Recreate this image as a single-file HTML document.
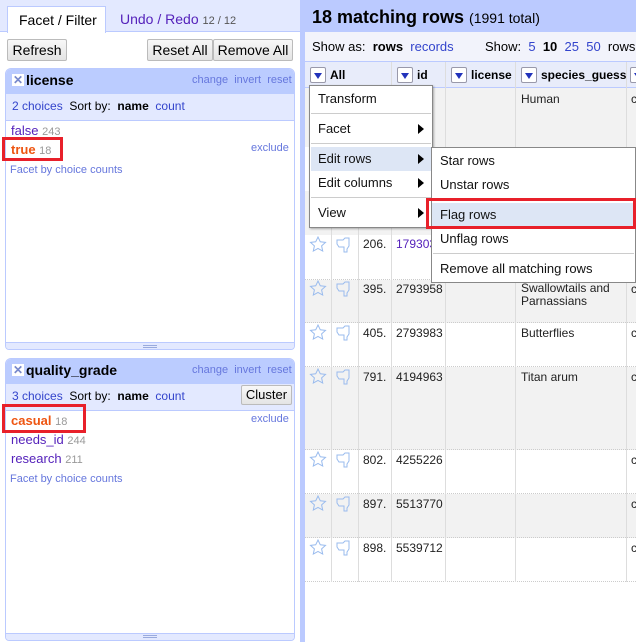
<!DOCTYPE html>
<html><head><meta charset="utf-8"><style>
*{margin:0;padding:0;box-sizing:border-box}
body{width:636px;height:642px;overflow:hidden;font-family:"Liberation Sans",Arial,sans-serif;font-size:13px;color:#000;background:#fff;position:relative}
.a{position:absolute;white-space:nowrap}
.lnk{color:#3344cc}
.sm{color:#6677dd;font-size:11px}
.btn{position:absolute;background:linear-gradient(#f8f8f8,#e4e4e4);border:1px solid #bbb;border-radius:2px;font-size:14px;text-align:center;line-height:20px}
.fx{position:absolute;width:12px;height:12px;background:#fff;color:#7788cc;font-size:12px;line-height:12px;text-align:center;font-weight:bold}
.row{position:absolute;left:305px;width:331px}
.vl{position:absolute;top:88px;height:494px;border-left:1px solid #ddd}
.cell{position:absolute;font-size:12px;color:#222}
.mi{position:absolute;font-size:13px;color:#111}
.arr{position:absolute;width:0;height:0;border-top:5px solid transparent;border-bottom:5px solid transparent;border-left:6px solid #000}
.dd{position:absolute;width:16px;height:16px;border:1px solid #99a;border-radius:2px;background:#fff}
.dd:after{content:"";position:absolute;left:3px;top:5px;border-left:4px solid transparent;border-right:4px solid transparent;border-top:6px solid #2233bb}
</style></head><body>
<!-- left panel -->
<div class="a" style="left:0;top:0;width:302px;height:642px;background:#fff"></div>
<div class="a" style="left:0;top:0;width:302px;height:32px;background:#e3e9ff;border-bottom:1px solid #bbcaff"></div>
<div class="a" style="left:7px;top:6px;width:99px;height:27px;background:#fff;border:1px solid #bbcaff;border-bottom:none;font-size:14px;padding:5px 0 0 11px">Facet / Filter</div>
<div class="a" style="left:120px;top:11px;font-size:14px;color:#5522bb">Undo / Redo <span style="font-size:11px;color:#555">12 / 12</span></div>
<div class="btn" style="left:7px;top:39px;width:60px;height:22px">Refresh</div>
<div class="btn" style="left:147px;top:39px;width:66px;height:22px">Reset All</div>
<div class="btn" style="left:213px;top:39px;width:80px;height:22px">Remove All</div>

<!-- license facet -->
<div class="a" style="left:5px;top:68px;width:290px;height:282px;border:1px solid #bbcaff;border-radius:6px 6px 4px 4px;overflow:hidden;background:#fff">
 <div class="a" style="left:0;top:0;width:290px;height:25px;background:#bbccff"></div>
 <div class="a" style="left:0;top:25px;width:290px;height:27px;background:#e3e9ff;border-bottom:1px solid #bbcaff"></div>
 <div class="a" style="left:0;bottom:0;width:290px;height:7px;background:#e3e9ff;border-top:1px solid #bbcaff"></div>
</div>
<div class="fx" style="left:12px;top:74px">✕</div>
<div class="a" style="left:26px;top:72px;font-size:14px;font-weight:bold">license</div>
<div class="a sm" style="left:192px;top:74px">change&nbsp; invert&nbsp; reset</div>
<div class="a" style="left:12px;top:99px;font-size:12px"><span class="lnk">2 choices</span>&nbsp; Sort by:&nbsp; <b>name</b>&nbsp; <span class="lnk">count</span></div>
<div class="a" style="left:11px;top:123px;font-size:13px;color:#5522bb">false <span style="color:#999;font-size:11px">243</span></div>
<div class="a" style="left:11px;top:142px;font-size:13px;color:#ee5511;font-weight:bold">true <span style="color:#999;font-size:11px;font-weight:normal">18</span></div>
<div class="a sm" style="left:251px;top:142px">exclude</div>
<div class="a sm" style="left:10px;top:164px">Facet by choice counts</div>
<div class="a" style="left:2px;top:137px;width:61px;height:24px;border:3px solid #e8202a"></div>
<div class="a" style="left:143px;top:345px;width:14px;height:3px;border-top:1px solid #99aadd;border-bottom:1px solid #99aadd"></div>

<!-- quality facet -->
<div class="a" style="left:5px;top:358px;width:290px;height:283px;border:1px solid #bbcaff;border-radius:6px 6px 4px 4px;overflow:hidden;background:#fff">
 <div class="a" style="left:0;top:0;width:290px;height:25px;background:#bbccff"></div>
 <div class="a" style="left:0;top:25px;width:290px;height:27px;background:#e3e9ff;border-bottom:1px solid #bbcaff"></div>
 <div class="a" style="left:0;bottom:0;width:290px;height:7px;background:#e3e9ff;border-top:1px solid #bbcaff"></div>
</div>
<div class="fx" style="left:12px;top:364px">✕</div>
<div class="a" style="left:26px;top:362px;font-size:14px;font-weight:bold">quality_grade</div>
<div class="a sm" style="left:192px;top:364px">change&nbsp; invert&nbsp; reset</div>
<div class="a" style="left:12px;top:389px;font-size:12px"><span class="lnk">3 choices</span>&nbsp; Sort by:&nbsp; <b>name</b>&nbsp; <span class="lnk">count</span></div>
<div class="btn" style="left:241px;top:385px;width:51px;height:20px;font-size:13px;line-height:18px">Cluster</div>
<div class="a" style="left:11px;top:413px;font-size:13px;color:#ee5511;font-weight:bold">casual <span style="color:#999;font-size:11px;font-weight:normal">18</span></div>
<div class="a sm" style="left:251px;top:413px">exclude</div>
<div class="a" style="left:11px;top:432px;font-size:13px;color:#5522bb">needs_id <span style="color:#999;font-size:11px">244</span></div>
<div class="a" style="left:11px;top:451px;font-size:13px;color:#5522bb">research <span style="color:#999;font-size:11px">211</span></div>
<div class="a sm" style="left:10px;top:473px">Facet by choice counts</div>
<div class="a" style="left:2px;top:404px;width:84px;height:29px;border:3px solid #e8202a"></div>
<div class="a" style="left:143px;top:635px;width:14px;height:3px;border-top:1px solid #99aadd;border-bottom:1px solid #99aadd"></div>

<!-- right panel -->
<div class="a" style="left:300px;top:0;width:336px;height:642px;background:#bbcaff"></div>
<div class="a" style="left:305px;top:32px;width:331px;height:610px;background:#fff"></div>
<div class="a" style="left:312px;top:7px;font-size:18px;font-weight:bold">18 matching rows <span style="font-weight:normal;font-size:14px">(1991 total)</span></div>
<div class="a" style="left:305px;top:32px;width:331px;height:30px;background:#f2f3fb;border-bottom:1px solid #bbcaff"></div>
<div class="a" style="left:312px;top:39px;font-size:13px">Show as:&nbsp; <b>rows</b>&nbsp; <span class="lnk">records</span></div>
<div class="a" style="left:485px;top:39px;font-size:13px">Show:&nbsp; <span class="lnk">5</span>&nbsp; <b>10</b>&nbsp; <span class="lnk">25</span>&nbsp; <span class="lnk">50</span>&nbsp; rows</div>
<div class="a" style="left:305px;top:62px;width:331px;height:26px;background:#e8ecfa;border-bottom:1px solid #bbcaff"></div>

<!-- rows -->
<div class="row" style="top:88px;height:59px;background:#f2f2f2"></div>
<div class="row" style="top:191px;height:44px;background:#f2f2f2"></div>
<div class="row" style="top:280px;height:43px;background:#f2f2f2"></div>
<div class="row" style="top:367px;height:83px;background:#f2f2f2"></div>
<div class="row" style="top:494px;height:44px;background:#f2f2f2"></div>
<div class="row" style="top:322px;border-top:1px dotted #ccc"></div>
<div class="row" style="top:366px;border-top:1px dotted #ccc"></div>
<div class="row" style="top:449px;border-top:1px dotted #ccc"></div>
<div class="row" style="top:493px;border-top:1px dotted #ccc"></div>
<div class="row" style="top:537px;border-top:1px dotted #ccc"></div>
<div class="row" style="top:581px;border-top:1px dotted #ccc"></div>
<div class="row" style="top:279px;border-top:1px dotted #ccc"></div>
<div class="vl" style="left:331px"></div><div class="vl" style="left:358px"></div>
<div class="vl" style="left:391px;top:62px;height:520px"></div><div class="vl" style="left:445px;top:62px;height:520px"></div>
<div class="vl" style="left:515px;top:62px;height:520px"></div><div class="vl" style="left:626px;top:62px;height:520px"></div>

<div class="dd" style="left:310px;top:67px"></div><div class="a" style="left:330px;top:68px;font-weight:bold;font-size:12px">All</div>
<div class="dd" style="left:397px;top:67px"></div><div class="a" style="left:417px;top:68px;font-weight:bold;font-size:12px">id</div>
<div class="dd" style="left:451px;top:67px"></div><div class="a" style="left:471px;top:68px;font-weight:bold;font-size:12px">license</div>
<div class="dd" style="left:521px;top:67px"></div><div class="a" style="left:541px;top:68px;font-weight:bold;font-size:12px">species_guess</div>
<div class="dd" style="left:630px;top:67px"></div>

<div class="cell" style="left:521px;top:92px">Human</div>
<div id="rw"></div>
<!-- row contents -->
<div class="cell" style="left:363px;top:237px">206.</div><div class="cell" style="left:396px;top:237px;color:#5522bb">179303</div>
<div class="cell" style="left:363px;top:282px">395.</div><div class="cell" style="left:396px;top:282px">2793958</div><div class="cell" style="left:521px;top:282px;line-height:13px">Swallowtails and<br>Parnassians</div>
<div class="cell" style="left:363px;top:326px">405.</div><div class="cell" style="left:396px;top:326px">2793983</div><div class="cell" style="left:521px;top:326px">Butterflies</div>
<div class="cell" style="left:363px;top:370px">791.</div><div class="cell" style="left:396px;top:370px">4194963</div><div class="cell" style="left:521px;top:370px">Titan arum</div>
<div class="cell" style="left:363px;top:453px">802.</div><div class="cell" style="left:396px;top:453px">4255226</div>
<div class="cell" style="left:363px;top:497px">897.</div><div class="cell" style="left:396px;top:497px">5513770</div>
<div class="cell" style="left:363px;top:541px">898.</div><div class="cell" style="left:396px;top:541px">5539712</div>
<div class="cell" style="left:631px;top:92px">c</div><div class="cell" style="left:631px;top:282px">c</div><div class="cell" style="left:631px;top:326px">c</div><div class="cell" style="left:631px;top:370px">c</div><div class="cell" style="left:631px;top:453px">c</div><div class="cell" style="left:631px;top:497px">c</div><div class="cell" style="left:631px;top:541px">c</div>
<svg class="a" style="left:305px;top:0" width="60" height="600">
<g fill="none" stroke="#99bbee" stroke-width="1">
<g id="s"><path d="M13 237l2.3 4.8 5.2.6-3.9 3.5 1.1 5.1-4.7-2.6-4.7 2.6 1.1-5.1-3.9-3.5 5.2-.6z"/><path d="M32 240h6l2-2h4v8l-2 3v3h-3v-5h-5l-2-3z"/></g>
<use href="#s" y="44"/><use href="#s" y="88"/><use href="#s" y="132"/><use href="#s" y="215"/><use href="#s" y="259"/><use href="#s" y="303"/>
</g></svg>

<!-- menu -->
<div class="a" style="left:309px;top:85px;width:124px;height:143px;background:#fff;border:1px solid #888;box-shadow:1px 1px 2px rgba(0,0,0,.3)"></div>
<div class="mi" style="left:318px;top:91px">Transform</div>
<div class="a" style="left:311px;top:113px;width:120px;border-top:1px solid #ccc"></div>
<div class="mi" style="left:318px;top:121px">Facet</div><div class="arr" style="left:418px;top:124px"></div>
<div class="a" style="left:311px;top:143px;width:120px;border-top:1px solid #ccc"></div>
<div class="a" style="left:311px;top:147px;width:121px;height:24px;background:#dde6f5"></div>
<div class="mi" style="left:318px;top:151px">Edit rows</div><div class="arr" style="left:418px;top:154px"></div>
<div class="mi" style="left:318px;top:175px">Edit columns</div><div class="arr" style="left:418px;top:178px"></div>
<div class="a" style="left:311px;top:197px;width:120px;border-top:1px solid #ccc"></div>
<div class="mi" style="left:318px;top:205px">View</div><div class="arr" style="left:418px;top:208px"></div>

<div class="a" style="left:431px;top:147px;width:205px;height:136px;background:#fff;border:1px solid #888"></div>
<div class="mi" style="left:440px;top:153px">Star rows</div>
<div class="mi" style="left:440px;top:177px">Unstar rows</div>
<div class="a" style="left:432px;top:203px;width:203px;height:24px;background:#dde6f5"></div>
<div class="mi" style="left:440px;top:207px">Flag rows</div>
<div class="mi" style="left:440px;top:231px">Unflag rows</div>
<div class="a" style="left:433px;top:253px;width:201px;border-top:1px solid #ccc"></div>
<div class="mi" style="left:440px;top:261px">Remove all matching rows</div>
<div class="a" style="left:426px;top:198px;width:210px;height:31px;border:3px solid #e8202a"></div>
</body></html>
